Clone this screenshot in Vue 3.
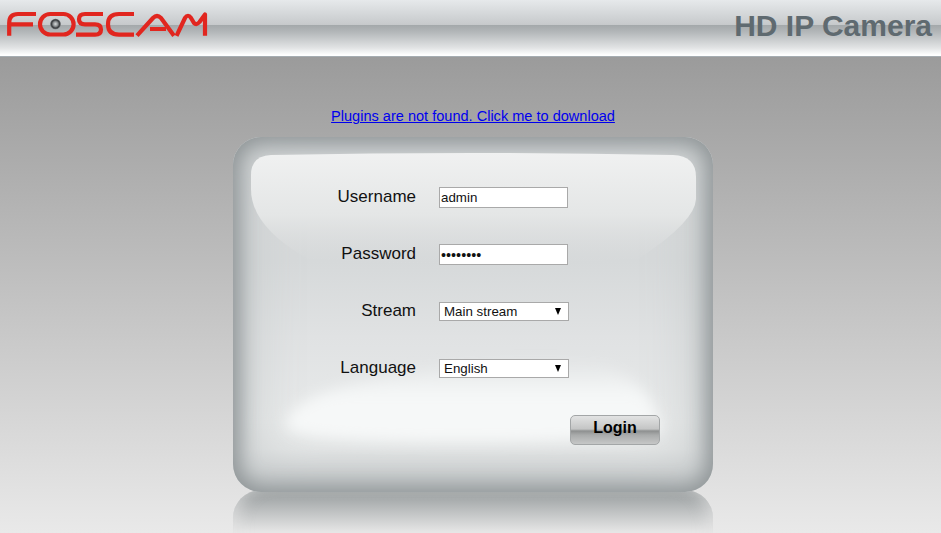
<script setup>
import { ref } from 'vue'

const username = ref('admin')
const password = ref('12345678')
const stream = ref('Main stream')
const language = ref('English')
const streams = ['Main stream', 'Sub stream']
const languages = ['English', 'Deutsch', 'Français']
</script>

<template>
  <div class="page">
    <header class="topbar">
      <svg class="logo" width="215" height="48" viewBox="0 0 215 48" role="img" aria-label="Foscam">
        <defs>
          <radialGradient id="lens" cx="50%" cy="50%" r="50%">
            <stop offset="0" stop-color="#d9dcdd" />
            <stop offset="0.45" stop-color="#8b8f91" />
            <stop offset="0.75" stop-color="#3a3d40" />
            <stop offset="1" stop-color="#6a6d70" />
          </radialGradient>
        </defs>
        <g fill="none" stroke="#e1261f" stroke-width="4.2" stroke-linejoin="round">
          <path d="M36 14H18Q9.2 14 9.2 23V35.8M9 24.4H33" />
          <rect x="40" y="14" width="33.6" height="20.5" rx="10.2" />
          <path d="M103 14H85Q79 14 79 19.2Q79 24.3 85 24.3H95Q101 24.3 101 29.4Q101 34.6 95 34.6H76" />
          <path d="M134 14H119Q108 14 108 24.2Q108 34.6 119 34.6H134" />
          <path d="M137 35.6L153 18Q157 14 161 18L174 35.8M150 29H166" />
          <path d="M176.5 35.8L185 18Q188 13.5 191 18L194 23Q196.5 25.5 199.5 22L205 14.5V35.8" />
        </g>
        <circle cx="55.5" cy="24" r="5.3" fill="url(#lens)" />
      </svg>
      <div class="title">HD IP Camera</div>
    </header>

    <main class="main">
      <a class="plugin" href="#">Plugins are not found. Click me to download</a>

      <div class="stage">
        <div class="reflection"></div>
        <form class="card" @submit.prevent>
          <svg class="gloss" width="480" height="355" viewBox="0 0 480 355" aria-hidden="true">
            <defs>
              <linearGradient id="glossFill" x1="0" y1="0" x2="0" y2="1">
                <stop offset="0" stop-color="#f0f1f1" />
                <stop offset="0.55" stop-color="#e4e6e6" />
                <stop offset="1" stop-color="#d8dadb" stop-opacity="0" />
              </linearGradient>
              <linearGradient id="blobFill" x1="0" y1="0" x2="0" y2="1">
                <stop offset="0" stop-color="#f6f8f8" stop-opacity="0" />
                <stop offset="0.45" stop-color="#f6f8f8" />
                <stop offset="1" stop-color="#f6f8f8" />
              </linearGradient>
              <filter id="soft" x="-10%" y="-30%" width="120%" height="160%">
                <feGaussianBlur stdDeviation="7" />
              </filter>
            </defs>
            <path d="M54 292Q48 268 110 250Q250 214 372 228Q424 250 428 296Q410 304 240 305Q75 306 54 292Z" fill="url(#blobFill)" filter="url(#soft)" />
            <path d="M18 38Q18 19 38 18Q240 14 440 18Q463 19 463 40V62Q462 85 405 122L240 130L75 122Q18 90 18 52Z" fill="url(#glossFill)" />
          </svg>

          <label class="row">
            <span class="label">Username</span>
            <input v-model="username" class="field" type="text" />
          </label>
          <label class="row">
            <span class="label">Password</span>
            <input v-model="password" class="field field-secret" type="password" />
          </label>
          <label class="row">
            <span class="label">Stream</span>
            <span class="select-wrap">
              <select v-model="stream" class="select">
                <option v-for="s in streams" :key="s">{{ s }}</option>
              </select>
            </span>
          </label>
          <label class="row">
            <span class="label">Language</span>
            <span class="select-wrap">
              <select v-model="language" class="select">
                <option v-for="l in languages" :key="l">{{ l }}</option>
              </select>
            </span>
          </label>

          <button class="login" type="submit">Login</button>
        </form>
      </div>
    </main>
  </div>
</template>

<style>
html, body { margin: 0; overflow: hidden; }
</style>

<style scoped>
.page {
  width: 941px;
  height: 533px;
  overflow: hidden;
  font-family: "Liberation Sans", Arial, sans-serif;
  background: linear-gradient(180deg, #9b9b9b 57px, #e9e9e9 533px);
}
.topbar {
  box-sizing: border-box;
  height: 57px;
  display: flex;
  align-items: flex-start;
  justify-content: space-between;
  border-bottom: 1px solid #a6adb2;
  background: linear-gradient(180deg, #e6e9eb 0, #c6c9cb 25px, #a3a8aa 25px, #b3b7b9 32px, #e2e4e5 48px, #ffffff 55px);
}
.logo { display: block; flex: none; }
.title {
  margin: 8px 9px 0 0;
  font-size: 30px;
  line-height: 36px;
  font-weight: 700;
  color: #5f6a70;
}
.main {
  display: flex;
  flex-direction: column;
  align-items: center;
  padding: 51px 0 0 5px;
}
.plugin {
  font-size: 14.56px;
  line-height: 17px;
  color: #0000ee;
  text-decoration: underline;
}
.stage {
  position: relative;
  margin-top: 12px;
  width: 480px;
}
.reflection {
  position: absolute;
  left: 0;
  top: 353px;
  width: 480px;
  height: 60px;
  border-radius: 28px 28px 0 0;
  background: linear-gradient(180deg, #a3a7a8 0, #a9adae 10px, #e6e6e6 42px);
  box-shadow: inset 14px 0 14px -8px rgba(230, 230, 230, 0.55), inset -14px 0 14px -8px rgba(230, 230, 230, 0.55);
}
.card {
  position: relative;
  box-sizing: border-box;
  width: 480px;
  height: 355px;
  padding-top: 50px;
  display: flex;
  flex-direction: column;
  gap: 36px;
  border-radius: 28px;
  overflow: hidden;
  background: linear-gradient(180deg, #d8dadb 0, #d6d9da 125px, #e0e2e3 200px, #e8eaea 285px, #e6e8e8 312px, #d0d3d4 340px);
  box-shadow: inset 0 0 20px 7px #8f9597, inset 0 0 60px 14px #c6cacb;
}
.gloss {
  position: absolute;
  left: 0;
  top: 0;
}
.row {
  position: relative;
  display: flex;
  align-items: center;
  height: 21px;
  gap: 23px;
}
.label {
  width: 183px;
  padding-bottom: 2px;
  text-align: right;
  font-size: 17px;
  color: #111;
}
.field {
  box-sizing: border-box;
  width: 129px;
  height: 21px;
  padding: 0 1px;
  border: 1px solid #a9a9a9;
  border-radius: 0;
  background: #fff;
  outline: none;
  font: 13.33px "Liberation Sans", Arial, sans-serif;
  color: #111;
}
.field-secret { font-size: 14.4px; }
.select-wrap {
  position: relative;
  display: block;
  width: 130px;
  height: 19px;
}
.select-wrap::after {
  content: "";
  position: absolute;
  right: 8px;
  top: 6px;
  border-left: 3.5px solid transparent;
  border-right: 3.5px solid transparent;
  border-top: 7px solid #000;
  pointer-events: none;
}
.select {
  display: block;
  box-sizing: border-box;
  width: 130px;
  height: 19px;
  padding: 0 0 1px 4px;
  border: 1px solid #a9a9a9;
  border-radius: 0;
  appearance: none;
  background: #fff;
  outline: none;
  font: 13.33px "Liberation Sans", Arial, sans-serif;
  color: #111;
}
.login {
  position: relative;
  align-self: flex-end;
  box-sizing: border-box;
  width: 90px;
  height: 30px;
  margin: 0 53px 0 0;
  padding: 0 0 4px;
  border: 1px solid #a3a6a7;
  border-radius: 5px;
  background: linear-gradient(180deg, #e2e3e3 0, #c4c5c5 13px, #8e9090 15px, #a9abab 19px, #c9caca 29px);
  font: 700 16px "Liberation Sans", Arial, sans-serif;
  color: #000;
}
</style>
